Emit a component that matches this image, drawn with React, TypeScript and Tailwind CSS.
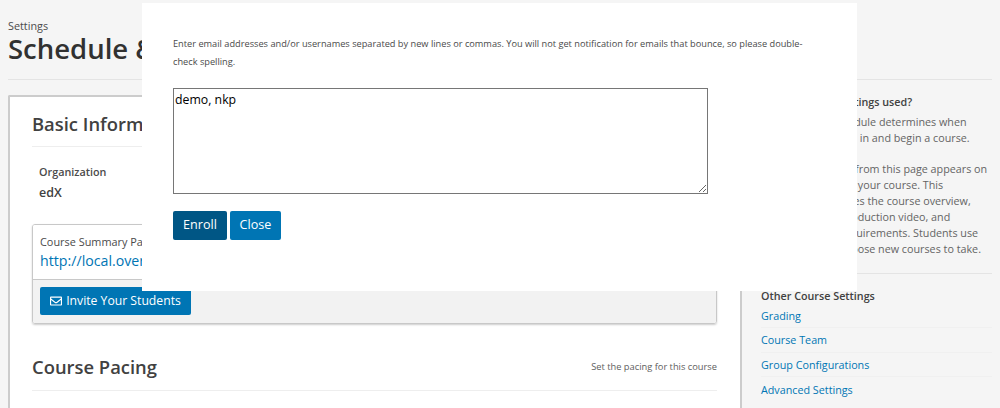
import { FaRegEnvelope } from "react-icons/fa";

const font = { fontFamily: '"Open Sans", sans-serif' };

export default function App() {
  return (
    <div style={font} className="relative h-[408px] w-[1000px] overflow-hidden bg-[#f5f5f5] text-[#414141]">
      <div className="px-2 pt-[18px]">
        <div className="text-[10.8px] leading-[15px] text-[#4a4a4a]">Settings</div>
        <h1 className="h-[46px] whitespace-nowrap text-[27.5px] font-semibold leading-[32px] text-[#313131]">Schedule &amp; Details</h1>
        <div className="h-px bg-[#e4e4e4]" />
      </div>
      <div className="mt-[15px] flex pl-2 pr-2">
        <main className="h-[400px] w-[732px] rounded-tl-[2px] border-l-2 border-t-2 border-[#cccccc] bg-white pl-[22px] pr-[23px] pt-[3px]">
          <div className="flex h-[47px] items-center border-b border-[#eeeeee]">
            <h2 className="text-[18.4px] font-semibold leading-[27px] text-[#414141]">Basic Information</h2>
          </div>
          <div className="mt-[16px] pl-[7px]">
            <div className="text-[10.8px] font-semibold leading-[17px] text-[#4a4a4a]">Organization</div>
            <div className="mt-[4px] text-[12.5px] font-semibold leading-[18px] text-[#414141]">edX</div>
          </div>
          <div className="mt-[22px] overflow-hidden rounded-[3px] border border-[#c8c8c8] shadow-[0_1px_2px_rgba(0,0,0,0.2)]">
            <div className="h-[54px] bg-white px-[7px] pt-[9px]">
              <div className="text-[10.9px] leading-[15px] text-[#4a4a4a]">Course Summary Page</div>
              <div className="mt-[2px] whitespace-nowrap text-[14.2px] leading-[20px] text-[#0075b4]">http://local.overhang.io:8000/courses/course-v1:edX+DemoX+Demo_Course/about</div>
            </div>
            <div className="h-[44px] border-t border-[#c8c8c8] bg-[#f2f2f2] px-[7px] pt-[7px]">
              <div className="flex h-[28px] w-[151px] items-center justify-center gap-[4px] rounded-[2px] bg-[#0075b4] text-[12.2px] text-white">
                <FaRegEnvelope size={12} />
                <span>Invite Your Students</span>
              </div>
            </div>
          </div>
          <div className="mt-[19px] flex h-[48px] items-center justify-between border-b border-[#eeeeee]">
            <h2 className="text-[18.4px] font-semibold leading-[27px] text-[#414141]">Course Pacing</h2>
            <span className="text-[9.3px] text-[#5e5e5e]">Set the pacing for this course</span>
          </div>
        </main>
        <aside className="w-[252px] border-l-2 border-[#cccccc] pl-[19px] text-[10.75px] leading-[16px] text-[#646464]">
          <h3 className="-mt-[1px] text-[10.75px] font-semibold leading-[16px] text-[#414141]">How are these settings used?</h3>
          <p className="mt-[4px] leading-[16px]">Your course's schedule determines when students can enroll in and begin a course.</p>
          <p className="mt-[15px] leading-[16px]">Other information from this page appears on the About page for your course. This information includes the course overview, course image, introduction video, and estimated time requirements. Students use About pages to choose new courses to take.</p>
          <div className="mt-[16px] h-px bg-[#e4e4e4]" />
          <h3 className="mt-[14px] text-[10.75px] font-semibold leading-[16px] text-[#414141]">Other Course Settings</h3>
          <ul className="mt-[2px] text-[#0075b4]">
            <li className="h-[22px] border-b border-[#f0f0f0] leading-[20px]">Grading</li>
            <li className="flex h-[25px] items-center border-b border-[#f0f0f0]">Course Team</li>
            <li className="flex h-[24px] items-center border-b border-[#f0f0f0]">Group Configurations</li>
            <li className="flex h-[25px] items-center">Advanced Settings</li>
          </ul>
        </aside>
      </div>
      <div className="absolute left-[142px] top-[3px] h-[288px] w-[715px] bg-white pl-[31px]">
        <p className="mt-[32px] w-[640px] text-[9.22px] leading-[17.5px] text-[#4a4a4a]">
          Enter email addresses and/or usernames separated by new lines or commas. You will not get notification for emails that bounce, so please double-check spelling.
        </p>
        <textarea
          readOnly
          defaultValue="demo, nkp"
          style={font}
          className="mt-[18px] block h-[106px] w-[535px] border border-[#767676] px-[1px] pt-[2px] pb-0 text-[12.3px] leading-[18px] text-black outline-none"
        />
        <div className="mt-[17px] flex gap-[3px]">
          <div className="flex h-[29px] w-[54px] items-center justify-center rounded-[2px] bg-[#005685] text-[12.6px] text-white">Enroll</div>
          <div className="flex h-[29px] w-[51px] items-center justify-center rounded-[2px] bg-[#0075b4] text-[12.6px] text-white">Close</div>
        </div>
      </div>
    </div>
  );
}
